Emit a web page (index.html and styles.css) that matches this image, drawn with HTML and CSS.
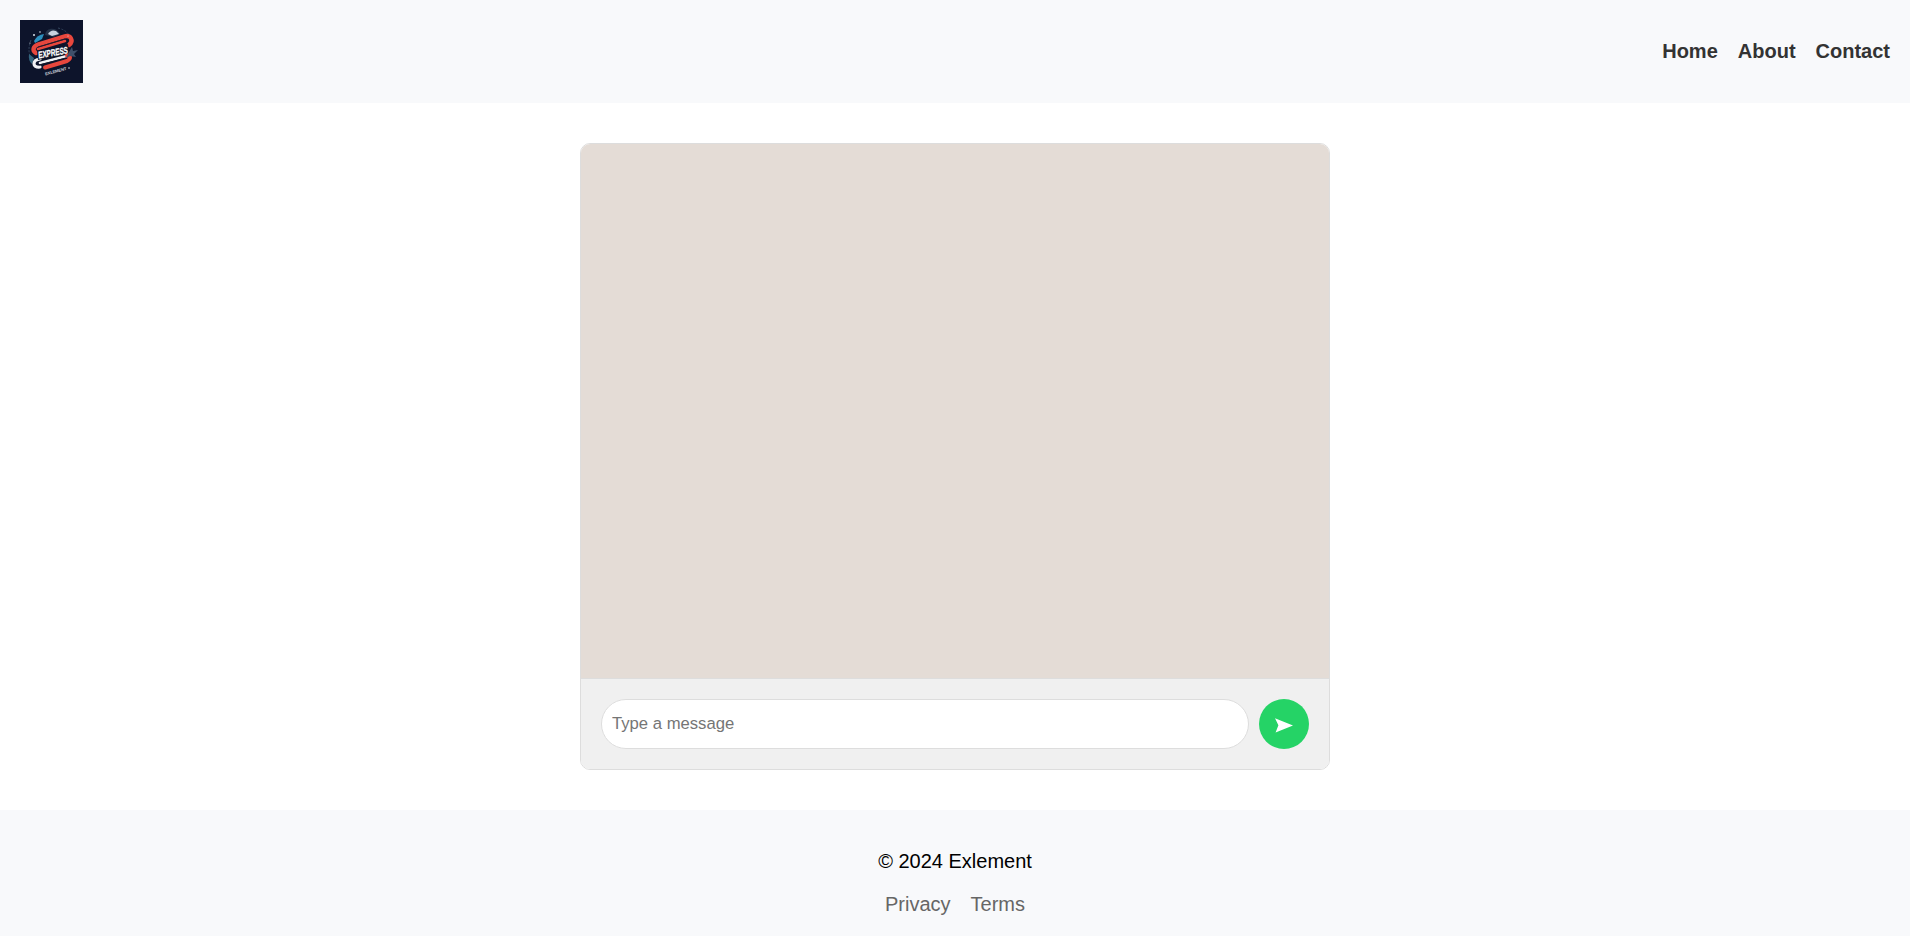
FILE: index.html
```html
<!DOCTYPE html>
<html lang="en">
<head>
<meta charset="utf-8">
<title>Exlement</title>
<link rel="stylesheet" href="styles.css">
</head>
<body>
<header class="header">
  <svg class="logo" viewBox="0 0 63 63" role="img" aria-label="Express Exlement">
    <rect width="63" height="63" fill="#0d142b"/>
    <path d="M11 20Q7 30 11 39M38 8Q47 10 51 18" fill="none" stroke="#34465d" stroke-width="1" stroke-dasharray="2 1.5"/>
    <path d="M25 15C26 7 37 7 40 14L34 17Z" fill="#253248"/>
    <path d="M28 14Q31 9 36 11L39 14L32 16Z" fill="#c9d3df"/>
    <path d="M14 21Q17 15 24 14L22 19L15 23Z" fill="#2c8fbd"/>
    <path d="M9 34L14 38L12 44Q8 41 9 34Z" fill="#34657f"/>
    <g fill="none" stroke-linecap="round" stroke-linejoin="round">
      <path d="M16 33C12 31 13 26 18 24.500L44 16.500C51 14.500 54 21 49 25" stroke="#e8473d" stroke-width="4.400"/>
      <path d="M18 29L45 21" stroke="#e8473d" stroke-width="2.600"/>
      <path d="M18 27L45 19" stroke="#2a1a2c" stroke-width=".8"/>
      <path d="M20 39C12 40 12 48 20 47" stroke="#f2f2f5" stroke-width="3.200"/>
      <path d="M20 43L47 36" stroke="#f2f2f5" stroke-width="2.600"/>
      <path d="M25 47.500L47 41C51 39 51 35 47 35.500" stroke="#e8473d" stroke-width="4"/>
      <path d="M19 45L46 38" stroke="#151629" stroke-width="1.200"/>
    </g>
    <path d="M17 31L48 24L49 32L18 40Z" fill="#10152a"/>
    <path d="M49 32L52 27L53 31L58 30L54 34L56 37L50 36L46 38Z" fill="#40506a"/>
    <text class="logo-name" transform="translate(18.500 38.500) rotate(-10) skewX(-7)" textLength="30" lengthAdjust="spacingAndGlyphs">EXPRESS</text>
    <text class="logo-sub" transform="translate(25.500 55.500) rotate(-15)" textLength="22">EXLEMENT</text>
    <g fill="#d7e0e8"><circle cx="14" cy="15" r="1"/><circle cx="20" cy="12" r=".8"/><circle cx="10" cy="23" r=".6"/><circle cx="48" cy="16" r=".6"/><circle cx="49" cy="48" r=".8"/></g>
  </svg>
  <nav class="nav"><a href="#">Home</a><a href="#">About</a><a href="#">Contact</a></nav>
</header>
<main class="chat">
  <div class="messages"></div>
  <form class="composer">
    <input class="message-input" type="text" placeholder="Type a message">
    <button class="send" type="button" aria-label="Send"><svg class="send-icon" viewBox="0 0 18 15"><path d="M0 .3L18 7.4L.6 14.5L3.4 7.300Z" fill="#fff"/></svg></button>
  </form>
</main>
<footer class="footer">
  <p class="copyright">© 2024 Exlement</p>
  <div class="footer-links"><a href="#">Privacy</a><a href="#">Terms</a></div>
</footer>
</body>
</html>
```
FILE: styles.css
```css
* { box-sizing: border-box; }
body {
  margin: 0;
  min-height: 936px;
  display: flex;
  flex-direction: column;
  background: #fff;
  font: 20px "Liberation Sans", Arial, sans-serif;
}
a { text-decoration: none; }
.header {
  display: flex;
  align-items: center;
  justify-content: space-between;
  padding: 20px;
  background: #f8f9fb;
}
.logo { display: block; width: 63px; height: 63px; }
.logo-name { font: bold 9.5px "Liberation Sans", sans-serif; fill: #fff; stroke: #fff; stroke-width: .3px; }
.logo-sub { font: bold 4.2px "Liberation Sans", sans-serif; fill: #c8ced8; }
.nav { display: flex; gap: 20px; }
.nav a { color: #333; font-weight: bold; }
.chat {
  width: 750px;
  height: 627px;
  margin: 40px auto;
  display: flex;
  flex-direction: column;
  border: 1px solid #ddd;
  border-radius: 10px;
  overflow: hidden;
}
.messages { flex: 1; background: #e4dcd6; }
.composer {
  display: flex;
  gap: 10px;
  padding: 20px;
  border-top: 1px solid #ddd;
  background: #f0f0f0;
}
.message-input {
  flex: 1;
  height: 50px;
  padding: 0 10px;
  border: 1px solid #ddd;
  border-radius: 25px;
  background: #fff;
  font: 16.667px "Liberation Sans", Arial, sans-serif;
}
.message-input::placeholder { color: #757575; }
.send {
  display: flex;
  align-items: center;
  justify-content: center;
  width: 50px;
  height: 50px;
  padding: 2px 0 0;
  border: 0;
  border-radius: 50%;
  background: #25d366;
}
.send-icon { width: 18px; height: 15px; }
.footer {
  flex: 1;
  padding: 20px;
  background: #f8f9fb;
  text-align: center;
}
.copyright { margin: 20px 0; color: #000; }
.footer-links { display: flex; justify-content: center; gap: 20px; }
.footer-links a { color: #666; }
```
